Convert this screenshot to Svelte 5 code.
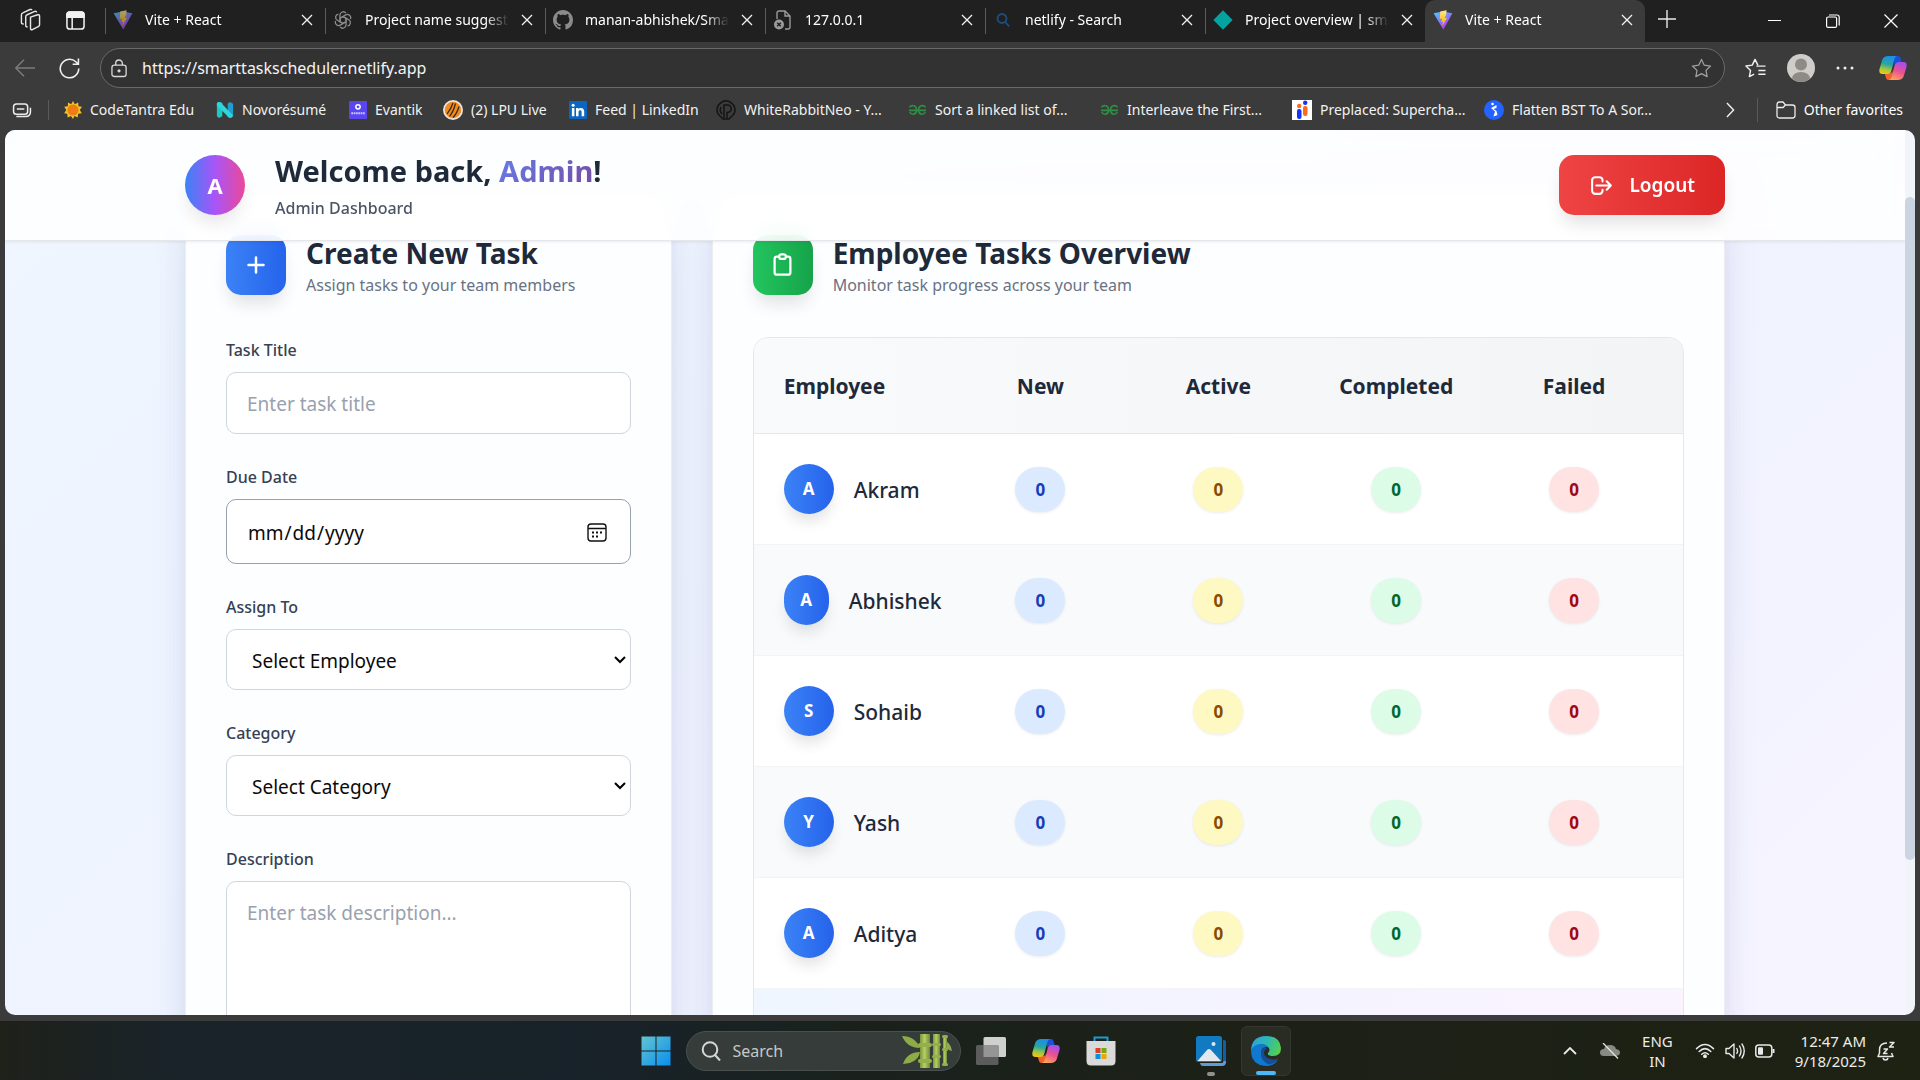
<script>
  const tabs = [
    { title: 'Vite + React', icon: 'vite' },
    { title: 'Project name suggestions', icon: 'openai' },
    { title: 'manan-abhishek/SmartTask', icon: 'github' },
    { title: '127.0.0.1', icon: 'deadpage' },
    { title: 'netlify - Search', icon: 'search' },
    { title: 'Project overview | smarttask', icon: 'netlify' },
    { title: 'Vite + React', icon: 'vite', active: true }
  ];

  const bookmarks = [
    { title: 'CodeTantra Edu', icon: 'sun' },
    { title: 'Novorésumé', icon: 'novo' },
    { title: 'Evantik', icon: 'evantik' },
    { title: '(2) LPU Live', icon: 'lpu' },
    { title: 'Feed | LinkedIn', icon: 'linkedin' },
    { title: 'WhiteRabbitNeo - Y...', icon: 'rabbit' },
    { title: 'Sort a linked list of...', icon: 'gfg' },
    { title: 'Interleave the First...', icon: 'gfg' },
    { title: 'Preplaced: Supercha...', icon: 'preplaced' },
    { title: 'Flatten BST To A Sor...', icon: 'flatten' }
  ];

  const employees = [
    { initial: 'A', name: 'Akram' },
    { initial: 'A', name: 'Abhishek' },
    { initial: 'S', name: 'Sohaib' },
    { initial: 'Y', name: 'Yash' },
    { initial: 'A', name: 'Aditya' }
  ];
  const statuses = ['new', 'active', 'completed', 'failed'];
</script>

{#snippet icon(name)}
  {#if name === 'vite'}
    <svg viewBox="0 0 20 20" width="20" height="20" aria-hidden="true">
      <defs>
        <linearGradient id="vite-a" x1="0" y1="0" x2=".6" y2="1"><stop offset="0" stop-color="#41d1ff" /><stop offset="1" stop-color="#bd34fe" /></linearGradient>
        <linearGradient id="vite-b" x1="0" y1="0" x2="0" y2="1"><stop offset="0" stop-color="#ffea83" /><stop offset="1" stop-color="#ffa800" /></linearGradient>
      </defs>
      <path d="M.6 3.2 10 1.6l9.4 1.6L10.3 19.6z" fill="url(#vite-a)" />
      <path d="M13.6.2 7.2 1.5 6.8 9l2.3-.4-.8 3.4 1.8-.4-1 4.6 5-8.4-2.5.5 1.6-3.8z" fill="url(#vite-b)" />
    </svg>
  {:else if name === 'openai'}
    <svg viewBox="0 0 20 20" width="18" height="18" fill="none" stroke="#8c8c8c" stroke-width="1.4" aria-hidden="true">
      {#each [0, 60, 120, 180, 240, 300] as a}
        <path transform="rotate({a} 10 10)" d="M10 6.2 6.6 8.1V4.6a3.7 3.7 0 0 1 6.6-2.3M6.6 8.1v4" />
      {/each}
    </svg>
  {:else if name === 'github'}
    <svg viewBox="0 0 16 16" width="20" height="20" fill="#8b8b8b" aria-hidden="true">
      <path d="M8 0C3.58 0 0 3.58 0 8c0 3.54 2.29 6.53 5.47 7.59.4.07.55-.17.55-.38 0-.19-.01-.82-.01-1.49-2.01.37-2.53-.49-2.69-.94-.09-.23-.48-.94-.82-1.13-.28-.15-.68-.52-.01-.53.63-.01 1.08.58 1.23.82.72 1.21 1.87.87 2.33.66.07-.52.28-.87.51-1.07-1.78-.2-3.64-.89-3.64-3.95 0-.87.31-1.59.82-2.15-.08-.2-.36-1.02.08-2.12 0 0 .67-.21 2.2.82.64-.18 1.32-.27 2-.27s1.36.09 2 .27c1.53-1.04 2.2-.82 2.2-.82.44 1.1.16 1.92.08 2.12.51.56.82 1.27.82 2.15 0 3.07-1.87 3.75-3.65 3.95.29.25.54.73.54 1.48 0 1.07-.01 1.93-.01 2.2 0 .21.15.46.55.38A8.01 8.01 0 0 0 16 8c0-4.42-3.58-8-8-8z" />
    </svg>
  {:else if name === 'deadpage'}
    <svg viewBox="0 0 20 20" width="20" height="20" fill="none" stroke="#9a9a9a" stroke-width="1.4" aria-hidden="true">
      <path d="M4 9V3a2 2 0 0 1 2-2h6l5 5v11a2 2 0 0 1-2 2h-3M12 1v5h5" />
      <circle cx="6" cy="14.5" r="5" fill="#9a9a9a" stroke="none" />
      <path d="m4.2 12.7 3.6 3.6m0-3.6-3.6 3.6" stroke="#202020" />
    </svg>
  {:else if name === 'search'}
    <svg viewBox="0 0 20 20" width="20" height="20" fill="none" stroke="#1c4f80" stroke-width="1.8" aria-hidden="true">
      <circle cx="9" cy="8.5" r="4.5" /><path d="m12.2 12 4 4.5" />
    </svg>
  {:else if name === 'netlify'}
    <svg viewBox="0 0 20 20" width="20" height="20" aria-hidden="true"><path d="m10 .2 9.6 9.8-9.6 9.8L.4 10z" fill="#05a3a0" /></svg>
  {:else if name === 'sun'}
    <svg viewBox="0 0 20 20" width="18" height="18" aria-hidden="true">
      <path d="m10 0 2 3.6 3.8-1.9.2 4.2 4 .6-2.5 3.4 2.3 3.6-4.1.7-.5 4.1-3.6-1.6L10 20l-2.3-3.4-3.7 1.8-.3-4.2-3.5-.6L2.600 10 .2 6.500l4.100-.6L4.400 1.700 8 3.600z" fill="#f5c32c" />
      <circle cx="10" cy="10" r="6.200" fill="#f07d12" />
    </svg>
  {:else if name === 'novo'}
    <svg viewBox="0 0 20 20" width="18" height="18" aria-hidden="true">
      <path d="M1 3q0-2 2.500-2L7 2v15l-3.500 2L1 17z" fill="#1fc8c4" /><path d="M19 3l-3.500-2L13 3v15l3.500 1L19 17z" fill="#1e9fd0" /><path d="M1 2.500Q3 0 5.500 2L19 16q-1.500 4-5 2L1 5z" fill="#2fd5d8" />
    </svg>
  {:else if name === 'evantik'}
    <svg viewBox="0 0 20 20" width="18" height="18" aria-hidden="true">
      <rect width="20" height="20" rx="1" fill="#5a46f0" /><circle cx="10" cy="6.500" r="2.400" fill="none" stroke="#fff" stroke-width="1.600" /><path d="M2.500 13.500h15" stroke="#c9c2ff" stroke-width="2.200" stroke-dasharray="2 .6" />
    </svg>
  {:else if name === 'lpu'}
    <svg viewBox="0 0 20 20" width="20" height="20" aria-hidden="true">
      <circle cx="10" cy="10" r="10" fill="#e9e6e2" /><circle cx="10" cy="10" r="8.200" fill="#f08a1d" />
      <path d="M4 14Q8 9 10 3M6.500 16.500q4-5 6-13M10 17.500q4-4 6-11" stroke="#33231a" stroke-width="1.200" fill="none" />
    </svg>
  {:else if name === 'linkedin'}
    <svg viewBox="0 0 20 20" width="18" height="18" aria-hidden="true">
      <rect width="20" height="20" rx="1.500" fill="#0a66c2" /><path d="M3.200 7.800h2.800V17H3.200zM7.800 7.800h2.700V9c1.500-2.200 6.400-2 6.400 2.600V17H14v-4.800c0-2.800-3.400-2.500-3.400 0V17H7.800z" fill="#fff" /><circle cx="4.600" cy="4.700" r="1.700" fill="#fff" />
    </svg>
  {:else if name === 'rabbit'}
    <svg viewBox="0 0 20 20" width="20" height="20" fill="none" stroke="#141414" stroke-width="1.500" aria-hidden="true">
      <path d="M7 1.500Q10 0 13 1.500q6 3 6 8.500 0 4-3 6l-3 3H7l-3-3q-3-2-3-6 0-5.500 6-8.500z" /><path d="M8 18V5h3.500a3.500 3.500 0 0 1 0 7.500H11V18M5 7q-2 4 1 7" />
    </svg>
  {:else if name === 'gfg'}
    <svg viewBox="0 0 20 12" width="19" height="12" fill="none" stroke="#2f8d46" stroke-width="1.700" aria-hidden="true">
      <path d="M1 6.400h18M1.500 3.200C4 .2 9 1 9 6.200S3 11.500 1.800 8.200M18.500 3.200C16 .2 11 1 11 6.200s6 5.300 7.200 2" />
    </svg>
  {:else if name === 'preplaced'}
    <svg viewBox="0 0 20 20" width="20" height="20" aria-hidden="true">
      <rect width="20" height="20" fill="#fff" /><rect x="5" y="9" width="4.500" height="10" rx="2" fill="#1733ff" /><rect x="11" y="6" width="4.500" height="10" rx="2" fill="#ff6a1a" /><circle cx="7.200" cy="6" r="2.200" fill="#ff6a1a" /><circle cx="13.200" cy="2.800" r="2.200" fill="#1733ff" />
    </svg>
  {:else if name === 'flatten'}
    <svg viewBox="0 0 20 20" width="20" height="20" aria-hidden="true">
      <circle cx="10" cy="10" r="10" fill="#2563ff" /><path d="M12.500 5 7 8l4 3.500-1.500 5 4-1.500-1-4L9.500 9l3-1z" fill="#fff" /><circle cx="8.500" cy="4" r="1.300" fill="#fff" />
    </svg>
  {/if}
{/snippet}

{#snippet copilot()}
  <svg viewBox="0 0 28 28" width="28" height="28" aria-hidden="true">
    <defs>
      <linearGradient id="cp-a" x1=".5" y1="0" x2=".3" y2="1"><stop offset="0" stop-color="#1b8fe8" /><stop offset=".45" stop-color="#2aa5a0" /><stop offset=".75" stop-color="#a5c93b" /><stop offset="1" stop-color="#f5c518" /></linearGradient>
      <linearGradient id="cp-b" x1=".7" y1="0" x2=".3" y2="1"><stop offset="0" stop-color="#a04ff0" /><stop offset=".5" stop-color="#ec4f92" /><stop offset="1" stop-color="#fba35a" /></linearGradient>
    </defs>
    <path d="M14 2h5q2 0 2.500 2l1.500 5h-5q-2 0-2.600 2z" fill="#1a4fd6" />
    <path d="M14 26H9.500q-2 0-2.500-2l-1.500-5H11q2 0 2.500-2z" fill="#f2602c" />
    <path d="M9.500 2H18q-2 .5-2.600 3l-3 11.500Q11.500 20 8 20H3.500Q-.5 20 .5 15L3.200 6Q4.500 2 9.500 2z" fill="url(#cp-a)" />
    <path d="M18.500 26H10q2-.5 2.600-3l3-11.500Q16.500 8 20 8h4.500q4 0 3 5l-2.700 9Q23.500 26 18.500 26z" fill="url(#cp-b)" />
  </svg>
{/snippet}

{#snippet cross()}
  <svg viewBox="0 0 12 12" width="12" height="12" fill="none" stroke="#f2f2f2" stroke-width="1.300" aria-hidden="true"><path d="m1 1 10 10M11 1 1 11" /></svg>
{/snippet}

<div class="desktop">
  <div class="browser">
    <div class="tabstrip">
      <div class="strip-tools">
        <button type="button" aria-label="Workspaces">
          <svg viewBox="0 0 22 26" width="21" height="25" fill="none" stroke="#e6e6e6" stroke-width="1.500" aria-hidden="true">
            <path d="M11 9.500 18.500 7q2-.5 2 1.500v9q0 1.500-1.500 2l-6 3q-2 .8-2-1.500z" /><path d="M8 19.500q-2 .5-2-1.500V9q0-1.500 1.500-2l8-3.500q1.500-.5 2 1" /><path d="M4 16.500q-2.500.5-2.500-1.500V7q0-1.500 1.500-2l7.500-3.500q1.500-.6 2 .8" />
          </svg>
        </button>
        <button type="button" aria-label="Tab actions">
          <svg viewBox="0 0 20 20" width="19" height="19" fill="none" stroke="#f2f2f2" stroke-width="1.600" aria-hidden="true">
            <rect x="1" y="1" width="18" height="18" rx="3" /><path d="M1 4q0-3 3-3h12q3 0 3 3v2.500H1z" fill="#f2f2f2" /><path d="M6.500 7v12" />
          </svg>
        </button>
      </div>
      {#each tabs as tab}
        <div class="tab" class:current={tab.active}>
          <span class="favicon" class:dim={!tab.active && tab.icon === 'vite'}>{@render icon(tab.icon)}</span>
          <span class="tab-title">{tab.title}</span>
          <button type="button" aria-label="Close tab">{@render cross()}</button>
        </div>
      {/each}
      <button type="button" class="new-tab" aria-label="New tab">
        <svg viewBox="0 0 18 18" width="18" height="18" stroke="#e8e8e8" stroke-width="1.400" aria-hidden="true"><path d="M9 0v18M0 9h18" /></svg>
      </button>
      <div class="window-controls">
        <button type="button" aria-label="Minimize"><svg viewBox="0 0 14 14" width="14" height="14" stroke="#fff" aria-hidden="true"><path d="M0 6.500h13" /></svg></button>
        <button type="button" aria-label="Restore"><svg viewBox="0 0 14 14" width="14" height="14" fill="none" stroke="#fff" stroke-width="1.200" aria-hidden="true"><rect x=".6" y="3" width="10" height="10.400" rx="1.500" /><path d="M3 1h8q2.200 0 2.200 2v8.500" /></svg></button>
        <button type="button" aria-label="Close window"><svg viewBox="0 0 14 14" width="14" height="14" stroke="#fff" stroke-width="1.200" aria-hidden="true"><path d="m.5.500 13 13M13.500.500l-13 13" /></svg></button>
      </div>
    </div>

    <div class="toolbar">
      <button type="button" aria-label="Back"><svg viewBox="0 0 20 18" width="20" height="18" fill="none" stroke="#7c7c7c" stroke-width="1.400" aria-hidden="true"><path d="M20 9H1M9 .800.800 9 9 17.200" /></svg></button>
      <button type="button" aria-label="Refresh"><svg viewBox="0 0 20 20" width="21" height="21" fill="none" stroke="#f0f0f0" stroke-width="1.500" aria-hidden="true"><path d="M18.800 10A8.800 8.800 0 1 1 16 3.600L18.500 6M18.500.500V6H13" /></svg></button>
      <label class="address">
        <svg viewBox="0 0 18 20" width="17" height="19" fill="none" stroke="#d8d8d8" stroke-width="1.400" aria-hidden="true"><rect x="1" y="6.500" width="15" height="12" rx="2.500" /><path d="M5 6.500V4.500a3.500 3.500 0 0 1 7 0v2" /><circle cx="8.500" cy="12.500" r="1" fill="#fff" /></svg>
        <input type="text" aria-label="Address bar" value="https://smarttaskscheduler.netlify.app" />
        <svg viewBox="0 0 22 22" width="21" height="21" fill="none" stroke="#a0a0a0" stroke-width="1.300" stroke-linejoin="round" aria-hidden="true"><path d="m11 1.500 2.900 6 6.600.9-4.800 4.600 1.200 6.500-5.900-3.100-5.900 3.100 1.200-6.500L1.500 8.400l6.600-.9z" /></svg>
      </label>
      <div class="toolbar-end">
        <button type="button" aria-label="Favorites"><svg viewBox="0 0 22 22" width="21" height="21" fill="none" stroke="#f0f0f0" stroke-width="1.500" stroke-linejoin="round" aria-hidden="true"><path d="M13.500 7.500 10.500 1.500 7.600 7.500 1 8.400l4.800 4.600-1.200 6.500 5-2.600M12 8.500h9.500M14 13h7.500M14 17h7.500" /></svg></button>
        <button type="button" aria-label="Profile"><svg viewBox="0 0 28 28" width="28" height="28" aria-hidden="true"><circle cx="14" cy="14" r="14" fill="#cfcdca" /><circle cx="14" cy="10.500" r="6" fill="#8e8a86" /><path d="M5 24.500q1-6.500 9-6.500t9 6.500q-8 7-18 0z" fill="#8e8a86" /></svg></button>
        <button type="button" aria-label="Settings and more"><svg viewBox="0 0 18 4" width="18" height="4" fill="#eee" aria-hidden="true"><circle cx="2" cy="2" r="1.500" /><circle cx="9" cy="2" r="1.500" /><circle cx="16" cy="2" r="1.500" /></svg></button>
        <button type="button" class="assistant" aria-label="Copilot">{@render copilot()}</button>
      </div>
    </div>

    <nav class="bookmarks" aria-label="Favorites bar">
      <button type="button" class="hub" aria-label="Workspace"><svg viewBox="0 0 20 16" width="20" height="15" fill="none" stroke="#ececec" stroke-width="1.600" aria-hidden="true"><rect x="1" y="1" width="15" height="11" rx="3" /><path d="M4.500 6.500h8M4 14.500h10q5-.5 5-5V5" /></svg></button>
      {#each bookmarks as b}
        <a href="#bookmark">{@render icon(b.icon)}<span>{b.title}</span></a>
      {/each}
      <button type="button" class="more" aria-label="More favorites"><svg viewBox="0 0 10 18" width="9" height="16" fill="none" stroke="#f0f0f0" stroke-width="1.600" aria-hidden="true"><path d="m1 1 7.500 8L1 17" /></svg></button>
      <button type="button" class="others">
        <svg viewBox="0 0 20 18" width="20" height="18" fill="none" stroke="#ececec" stroke-width="1.300" aria-hidden="true"><path d="M1 4q0-3 2.500-3H7l2.500 3H16.500q2.500 0 2.500 2.500v8q0 2.500-2.500 2.500h-13Q1 17 1 14.500zM1 6.500h6L9.500 4" /></svg>
        <span>Other favorites</span>
      </button>
    </nav>

    <div class="viewport">
      <div class="page">
        <header class="page-header">
          <div class="container header-row">
            <div class="identity">
              <div class="admin-avatar">A</div>
              <div class="heading">
                <h1>Welcome back, <span class="accent">Admin</span>!</h1>
                <p>Admin Dashboard</p>
              </div>
            </div>
            <button type="button" class="logout">
              <svg viewBox="0 0 24 24" width="25" height="25" fill="none" stroke="currentColor" stroke-width="2" stroke-linecap="round" stroke-linejoin="round" aria-hidden="true"><path d="M17 16l4-4m0 0l-4-4m4 4H7m6 4v1a3 3 0 01-3 3H6a3 3 0 01-3-3V7a3 3 0 013-3h4a3 3 0 013 3v1" /></svg>
              <span>Logout</span>
            </button>
          </div>
        </header>

        <main class="container cards">
          <section class="card">
            <div class="card-head">
              <div class="badge-icon blue">
                <svg viewBox="0 0 24 24" width="30" height="30" fill="none" stroke="#fff" stroke-width="2" stroke-linecap="round" stroke-linejoin="round" aria-hidden="true"><path d="M12 6v12M6 12h12" /></svg>
              </div>
              <div class="heading">
                <h2>Create New Task</h2>
                <p>Assign tasks to your team members</p>
              </div>
            </div>
            <form>
              <div class="field"><label for="title">Task Title</label><input id="title" type="text" placeholder="Enter task title" /></div>
              <div class="field"><label for="due">Due Date</label><input id="due" type="date" /></div>
              <div class="field"><label for="assign">Assign To</label><select id="assign"><option>Select Employee</option></select></div>
              <div class="field"><label for="category">Category</label><select id="category"><option>Select Category</option></select></div>
              <div class="field"><label for="description">Description</label><textarea id="description" rows="6" placeholder="Enter task description..."></textarea></div>
            </form>
          </section>

          <section class="card wide">
            <div class="card-head">
              <div class="badge-icon green">
                <svg viewBox="0 0 24 24" width="27" height="27" fill="none" stroke="#fff" stroke-width="2" stroke-linecap="round" stroke-linejoin="round" aria-hidden="true"><path d="M9 5H7a2 2 0 00-2 2v12a2 2 0 002 2h10a2 2 0 002-2V7a2 2 0 00-2-2h-2M9 5a2 2 0 002 2h2a2 2 0 002-2M9 5a2 2 0 012-2h2a2 2 0 012 2" /></svg>
              </div>
              <div class="heading">
                <h2>Employee Tasks Overview</h2>
                <p>Monitor task progress across your team</p>
              </div>
            </div>
            <table>
              <thead>
                <tr><th>Employee</th><th>New</th><th>Active</th><th>Completed</th><th>Failed</th></tr>
              </thead>
              <tbody>
                {#each employees as e}
                  <tr>
                    <td class="person"><span class="avatar">{e.initial}</span><span class="name">{e.name}</span></td>
                    {#each statuses as s}
                      <td><span class="count {s}">0</span></td>
                    {/each}
                  </tr>
                {/each}
              </tbody>
            </table>
          </section>
        </main>
      </div>
      <div class="scrollbar"><div class="thumb"></div></div>
    </div>
  </div>

  <footer class="taskbar">
    <div class="apps">
      <button type="button" aria-label="Start">
        <svg viewBox="0 0 30 30" width="30" height="30" aria-hidden="true"><defs><linearGradient id="win" x1="0" y1="0" x2="1" y2="1"><stop offset="0" stop-color="#62c5cf" /><stop offset="1" stop-color="#0a8df0" /></linearGradient></defs><path d="M.5.500h14v14H.5zM15.500.500h14v14h-14zM.5 15.500h14v14H.5zM15.500 15.500h14v14h-14z" fill="url(#win)" /></svg>
      </button>
      <label class="search">
        <svg viewBox="0 0 20 20" width="20" height="20" fill="none" stroke="#d6d8d6" stroke-width="2" aria-hidden="true"><circle cx="9" cy="8.500" r="7.300" /><path d="m14 14 5 5.500" /></svg>
        <input type="text" aria-label="Search" placeholder="Search" />
        <svg viewBox="0 0 50 34" width="50" height="34" aria-hidden="true">
          <defs><linearGradient id="bam" x1="0" x2="1"><stop offset="0" stop-color="#77953a" /><stop offset=".45" stop-color="#b5cf63" /><stop offset="1" stop-color="#6f8b35" /></linearGradient></defs>
          <path d="M0 2q13 0 18 12Q5 14 0 2zM1 30q4-12 17-12-2 11-17 12zM42 6q7 3 8 11-7-1-8-11z" fill="#8dac48" />
          <path d="M18 0h10v9h-10zM18 11h10v14h-10zM18 27h10v7h-10z" fill="url(#bam)" /><path d="M31 0h7v9h-7zM31 11h7v11h-7zM31 24h7v10h-7z" fill="url(#bam)" /><path d="M41 3h4v12h-4zM41 17h4v13h-4z" fill="url(#bam)" />
          <g fill="#93b04c"><rect x="16" y="9" width="14" height="4" rx="2" /><rect x="16" y="25" width="14" height="4" rx="2" /><rect x="30" y="9" width="9" height="3" rx="1.500" /><rect x="30" y="21" width="9" height="3" rx="1.500" /><rect x="40" y="1" width="6" height="3" rx="1.500" /><rect x="40" y="14" width="6" height="3" rx="1.500" /><rect x="40" y="29" width="6" height="3" rx="1.500" /></g>
        </svg>
      </label>
      <button type="button" aria-label="Task view"><svg viewBox="0 0 30 28" width="30" height="28" aria-hidden="true"><rect x="7.500" width="22.500" height="20" rx="1.500" fill="#d0d0cf" /><rect y="8" width="22.500" height="20" rx="1.500" fill="#5b5c5b" /><path d="M7.500 8h15v12h-15z" fill="#949594" /></svg></button>
      <button type="button" aria-label="Copilot">{@render copilot()}</button>
      <button type="button" aria-label="Store"><svg viewBox="0 0 30 30" width="30" height="30" aria-hidden="true"><path d="M8.500 7V1.500h13V7" fill="none" stroke="#1c9bd0" stroke-width="2" /><path d="M.5 5h29v20q0 4.500-4.500 4.500H5Q.5 29.500.5 25z" fill="#d9dad9" /><path d="M9.500 12h5v5h-5z" fill="#d9411f" /><path d="M15.500 12h5v5h-5z" fill="#7aa70c" /><path d="M9.500 18h5v5h-5z" fill="#0b93d8" /><path d="M15.500 18h5v5h-5z" fill="#eba609" /></svg></button>
      <span></span>
      <button type="button" class="running" aria-label="Photos"><svg viewBox="0 0 30 30" width="30" height="30" aria-hidden="true"><path d="M4 27h21.500q2 0 2-2V4q2.500.5 2.500 3v19q0 4-4 4H7q-2.500 0-3-3z" fill="#5f9bd8" /><path d="M27 4q3 .5 3 3v18h-3z" fill="#0a5fae" /><rect width="26" height="26" rx="2.500" fill="#127ac0" /><path d="M1.500 25 11 14q2-2 4 0l10 11z" fill="#e3e8ee" /><circle cx="17.500" cy="8" r="2" fill="#dfe8ef" /></svg></button>
      <button type="button" class="running focused" aria-label="Edge">
        <svg viewBox="0 0 30 30" width="30" height="30" aria-hidden="true">
          <defs><linearGradient id="ed-a" x1="0" y1=".3" x2="1" y2=".6"><stop offset="0" stop-color="#2aa4d8" /><stop offset=".5" stop-color="#2fb9b0" /><stop offset="1" stop-color="#55cf4c" /></linearGradient></defs>
          <path d="M0 14Q1 0 15 0q14 0 15 12 0 8-8 8-6 0-5-3 3-3 0-6Q10 5 0 14z" fill="url(#ed-a)" />
          <path d="M0 14Q3 8 10 8q5 0 7 3-7-1-7 6 0 9 10 10 4 0 7-3-4 6-12 6Q0 29 0 14z" fill="#1178d0" />
          <path d="M14 11.500q-4 1-4 6 0 8 8 11 6-1 9.500-6-5 2-10 0-4-2-4.500-5t2.500-5q-1-1-1.500-1z" fill="#134f96" />
        </svg>
      </button>
    </div>
    <div class="tray">
      <svg viewBox="0 0 14 8" width="14" height="8" fill="none" stroke="#e8e8e6" stroke-width="1.800" aria-hidden="true"><path d="m1 7 6-6 6 6" /></svg>
      <svg class="cloud" viewBox="0 0 20 16" width="20" height="16" aria-hidden="true"><path d="M4 13q-4 0-4-3.500T4 6q1-4 6-4t6 4q4 .5 4 3.500T16 13z" fill="#878a82" /><path d="m3 0 15 15.500" stroke="#e4e4e0" stroke-width="1.300" /></svg>
      <div class="lang"><span>ENG</span><span>IN</span></div>
      <div class="system">
        <svg viewBox="0 0 20 16" width="20" height="15" fill="none" stroke="#e8e8e6" stroke-width="1.600" stroke-linecap="round" aria-hidden="true"><path d="M1 6q9-9 18 0M3.800 9q6.200-6 12.400 0M6.500 12q3.500-3.200 7 0" /><circle cx="10" cy="14" r="1.300" fill="#fff" /></svg>
        <svg viewBox="0 0 20 18" width="20" height="18" fill="none" stroke="#e8e8e6" stroke-width="1.400" stroke-linecap="round" stroke-linejoin="round" aria-hidden="true"><path d="M1 6.500h3L9 2v14L4 11.500H1zM11.800 6.500q1.500 2.500 0 5M14.500 4q3 5 0 10M17 2q4.500 7 0 14" /></svg>
        <svg viewBox="0 0 20 14" width="20" height="14" aria-hidden="true"><rect x=".8" y="1" width="16" height="12" rx="3" fill="none" stroke="#e8e8e6" stroke-width="1.500" /><rect x="3" y="3.200" width="5" height="7.600" rx="1" fill="#e8e8e6" /><path d="M18.500 5v4" stroke="#e8e8e6" stroke-width="2" /></svg>
      </div>
      <div class="clock"><span>12:47 AM</span><span>9/18/2025</span></div>
      <svg viewBox="0 0 18 20" width="18" height="20" fill="none" stroke="#e8e8e6" stroke-width="1.500" stroke-linejoin="round" aria-hidden="true"><path d="M10 2Q2.500 2 2.500 9v3L1 15.500h15L14.500 12M6 17q.5 2 2.500 2t2.500-2M6.500 8h4l-4 4.500h4M12.500 1.500H17L12.500 6H17" /></svg>
    </div>
  </footer>
</div>

<style>
  :global(body) { margin: 0; background: #3b3b3b; }

  .desktop {
    display: flex;
    flex-direction: column;
    height: 100vh;
    overflow: hidden;
    font-family: "Noto Sans", "Open Sans", sans-serif;
    color: #fff;
  }
  .desktop :is(button, input, select, textarea) { font-family: inherit; }
  .desktop * { box-sizing: border-box; }
  svg { flex: none; display: block; }
  h1, h2, p { margin: 0; }

  .browser { flex: 1; min-height: 0; display: flex; flex-direction: column; background: #3b3b3b; padding-bottom: 6px; }
  .browser button, .taskbar button { border: 0; background: none; padding: 0; color: inherit; display: flex; align-items: center; justify-content: center; }

  /* Tab strip */
  .tabstrip { display: flex; height: 42px; background: #202020; flex: none; }
  .strip-tools { display: flex; align-items: center; gap: 25px; padding: 0 20px 2px; width: 105px; flex: none; }
  .tab {
    flex: 0 1 220px; min-width: 0; display: flex; align-items: center; gap: 12px; padding: 0 12px 2px 8px;
    background: linear-gradient(#5c5c5c, #5c5c5c) 0 8px / 1px 26px no-repeat;
  }
  .tab.current { background: #3b3b3b; border-radius: 10px 10px 0 0; }
  .tab-title {
    flex: 1; min-width: 0; overflow: hidden; white-space: nowrap; font-size: 14px; line-height: 20px;
    mask-image: linear-gradient(to right, #000 calc(100% - 24px), transparent);
  }
  .favicon { width: 20px; display: flex; justify-content: center; flex: none; }
  .favicon.dim { opacity: .65; }
  .browser .new-tab { width: 43px; padding-bottom: 4px; flex: none; }
  .window-controls { display: flex; margin-left: auto; }
  .window-controls button { width: 58px; }

  /* Toolbar */
  .toolbar { display: flex; align-items: center; height: 52px; padding: 0 13px 0 15px; flex: none; gap: 24px; }
  .address {
    flex: 1; height: 40px; display: flex; align-items: center; gap: 14px; padding: 0 12px 0 10px;
    border: 1px solid #6a6a6a; border-radius: 20px; background: #323232; margin-left: -4px;
  }
  .address input { flex: 1; border: 0; background: none; color: #f4f4f4; font-size: 16px; line-height: 24px; outline: 0; padding: 0; }
  .toolbar-end { display: flex; align-items: center; gap: 21px; margin-left: -4px; }
  .toolbar-end .assistant { margin-left: 4px; }

  /* Favorites bar */
  .bookmarks {
    display: grid; height: 36px; align-items: center; flex: none; padding: 0 17px 4px 12px; font-size: 14px; line-height: 20px;
    grid-template-columns: 52px 152px 133px 94px 126px 147px repeat(5, 192px) 1fr auto;
  }
  .bookmarks a { display: flex; align-items: center; gap: 8px; color: #f2f2f2; text-decoration: none; white-space: nowrap; min-width: 0; }
  .browser .hub { width: 37px; height: 20px; justify-content: flex-start; border-right: 1px solid #5a5a5a; }
  .browser .more { justify-content: flex-end; padding-right: 22px; }
  .browser .others { gap: 8px; font-size: 14px; line-height: 20px; border-left: 1px solid #5a5a5a; padding-left: 18px; height: 24px; }

  /* Page */
  .viewport { flex: 1; min-height: 0; display: flex; margin: 0 5px; border-radius: 10px; overflow: hidden; }
  .page { flex: 1; min-width: 0; overflow: hidden; background: linear-gradient(135deg, #eff6ff, #eef2ff 55%, #faf5ff 120%); color: #1e2939; }
  .scrollbar { width: 10px; background: #f1f5f9; padding-top: 67px; flex: none; }
  .thumb { height: 81%; border-radius: 5px; background: #cbd5e1; }
  .container { max-width: 1600px; margin: 0 auto; padding: 0 30px; }
  .heading { padding-top: 2px; }

  .page-header {
    position: sticky; top: 0; z-index: 2; background: rgba(255, 255, 255, .85); backdrop-filter: blur(10px);
    border-bottom: 1px solid #e5e7eb; box-shadow: 0 1px 3px rgba(0, 0, 0, .08);
  }
  .header-row { display: flex; align-items: center; justify-content: space-between; padding-top: 19px; padding-bottom: 19px; }
  .identity { display: flex; align-items: center; gap: 30px; }
  .admin-avatar {
    width: 60px; height: 60px; border-radius: 50%; display: flex; align-items: center; justify-content: center;
    background: linear-gradient(to right, #3b82f6, #a855f7, #ec4899); color: #fff; font-size: 22px; font-weight: 700;
    box-shadow: 0 12px 18px -4px rgba(0, 0, 0, .1);
  }
  h1 { font-size: 29px; line-height: 40px; font-weight: 700; }
  .accent { background: linear-gradient(135deg, #667eea, #764ba2); background-clip: text; color: transparent; }
  .identity p { margin-top: 5px; font-size: 16px; line-height: 25px; font-weight: 500; color: #4a5565; }
  .browser .logout {
    height: 60px; padding: 0 30px; gap: 15px; border-radius: 15px; color: #fff; font-size: 19px; font-weight: 600;
    background: linear-gradient(to right, #ef4444, #dc2626); box-shadow: 0 12px 18px -4px rgba(0, 0, 0, .12);
  }

  .cards { display: grid; grid-template-columns: repeat(3, minmax(0, 1fr)); gap: 40px; margin-top: -51px; }
  .card {
    padding: 40px; border: 1px solid rgba(229, 231, 235, .7); border-radius: 20px; background: #fdfeff;
    box-shadow: 0 25px 50px -12px rgba(60, 60, 120, .12), 0 0 24px rgba(60, 60, 120, .07);
  }
  .wide { grid-column: span 2; }
  .card-head { display: flex; align-items: center; gap: 20px; margin-bottom: 39px; }
  .badge-icon { width: 60px; height: 60px; border-radius: 15px; display: flex; align-items: center; justify-content: center; flex: none; box-shadow: 0 12px 18px -4px rgba(0, 0, 0, .12); }
  .blue { background: linear-gradient(to right, #3b82f6, #2563eb); }
  .green { background: linear-gradient(to right, #22c55e, #16a34a); }
  h2 { font-size: 28px; line-height: 40px; font-weight: 700; }
  .card-head p { font-size: 16px; line-height: 25px; color: #6a7282; }

  form { display: flex; flex-direction: column; gap: 30px; }
  .field { display: flex; flex-direction: column; gap: 8px; }
  .field label { font-size: 16px; line-height: 27px; font-weight: 500; color: #364153; }
  .field :is(input, select, textarea) {
    height: 62px; width: 100%; padding: 2px 20px 0; border: 1px solid #d1d5dc; border-radius: 10px; background: #fff;
    font-size: 19px; line-height: 30px; color: #0a0a0a; outline: 0;
  }
  .field input[type='date'] { height: 65px; border-color: #99a1af; }
  .field input[type='date']::-webkit-calendar-picker-indicator {
    width: 20px; height: 20px; padding: 0; margin-right: 3px;
    background: url("data:image/svg+xml,%3Csvg xmlns='http://www.w3.org/2000/svg' viewBox='0 0 20 20' fill='none' stroke='%23111' stroke-width='1.4'%3E%3Crect x='1' y='1' width='18' height='17' rx='3'/%3E%3Cpath d='M1 5.500h18'/%3E%3Cpath d='M5 9.500h2m2 0h2m2 0h2M5 13.500h2m2 0h2' stroke-width='2'/%3E%3C/svg%3E") center / 20px no-repeat;
  }
  .field select {
    height: 61px; appearance: none; padding-left: 25px;
    background: #fff url("data:image/svg+xml,%3Csvg xmlns='http://www.w3.org/2000/svg' viewBox='0 0 12 8' fill='none' stroke='%23000' stroke-width='2'%3E%3Cpath d='m1 1 5 5 5-5'/%3E%3C/svg%3E") right 4px center / 12px 8px no-repeat;
  }
  .field textarea { height: 200px; padding: 16px 20px; resize: none; }
  .field ::placeholder { color: #99a1af; }

  table { display: block; border: 1px solid #e5e7eb; border-radius: 15px; overflow: hidden; background: linear-gradient(to right, #eff6ff, #f5f3ff 60%, #fbf4ff); padding-bottom: 96px; }
  thead, tbody { display: block; }
  tr { display: grid; grid-template-columns: repeat(5, minmax(0, 1fr)); gap: 20px; align-items: center; padding: 0 30px; }
  thead tr { height: 96px; background: linear-gradient(to right, #f9fafb, #f3f4f6); border-bottom: 1px solid #e5e7eb; }
  th { padding: 0; font-size: 21px; line-height: 30px; font-weight: 700; }
  th:first-child { text-align: left; }
  tbody tr { height: 111px; background: #fff; border-bottom: 1px solid #f3f4f6; }
  tbody tr:nth-child(even) { background: #f9fafc; }
  td { padding: 0; display: flex; justify-content: center; }
  .person { justify-content: flex-start; align-items: center; gap: 20px; font-size: 21px; line-height: 30px; font-weight: 500; }
  .name { padding-top: 2px; }
  .avatar {
    width: 50px; height: 50px; border-radius: 25px; display: flex; align-items: center; justify-content: center; color: #fff;
    font-size: 17px; font-weight: 700; background: linear-gradient(to right, #3b82f6, #2563eb); box-shadow: 0 10px 15px -3px rgba(0, 0, 0, .12);
  }
  .count { width: 50px; height: 45px; border-radius: 23px; display: flex; align-items: center; justify-content: center; font-size: 17px; font-weight: 700; box-shadow: 0 1px 3px rgba(0, 0, 0, .08); }
  .new { background: #dbeafe; color: #193cb8; }
  .active { background: #fef9c2; color: #894b00; }
  .completed { background: #dcfce7; color: #016630; }
  .failed { background: #ffe2e2; color: #9f0712; }

  /* Taskbar */
  .taskbar {
    flex: none; height: 59px; display: grid; grid-template-columns: 1fr auto 1fr; align-items: center; padding: 0 25px 0 26px;
    background: linear-gradient(to right, #1f211a, #1a2328 8%, #18222a 30%, #1a211c 45%, #1c2017 65%, #1d2213);
  }
  .apps { grid-column: 2; display: flex; align-items: center; gap: 5px; }
  .apps button, .apps > span { width: 50px; height: 50px; border-radius: 6px; }
  .search { width: 275px; height: 40px; display: flex; align-items: center; gap: 12px; padding: 0 8px 0 14px; border: 1px solid #4a504d; border-radius: 20px; background: #363c3a; }
  .search input { flex: 1; min-width: 0; border: 0; background: none; padding: 0; font-size: 16px; line-height: 24px; outline: 0; color: #fff; }
  .search ::placeholder { color: #c6c9c6; }
  .running { position: relative; }
  .running::after { content: ""; position: absolute; bottom: 0; left: 50%; width: 8px; height: 4px; margin-left: -4px; border-radius: 2px; background: #8f918c; }
  .taskbar .focused { background: #292c23; border: 1px solid #34372e; }
  .focused::after { width: 20px; margin-left: -10px; background: #4cb8f5; }
  .tray { grid-column: 3; justify-self: end; display: flex; align-items: center; font-size: 15px; line-height: 20px; color: #ecece8; }
  .cloud { margin-left: 23px; }
  .lang { display: flex; flex-direction: column; align-items: center; margin: 0 22px; }
  .system { display: flex; align-items: center; gap: 10px; }
  .clock { display: flex; flex-direction: column; align-items: flex-end; margin: 0 11px 0 20px; }
</style>
